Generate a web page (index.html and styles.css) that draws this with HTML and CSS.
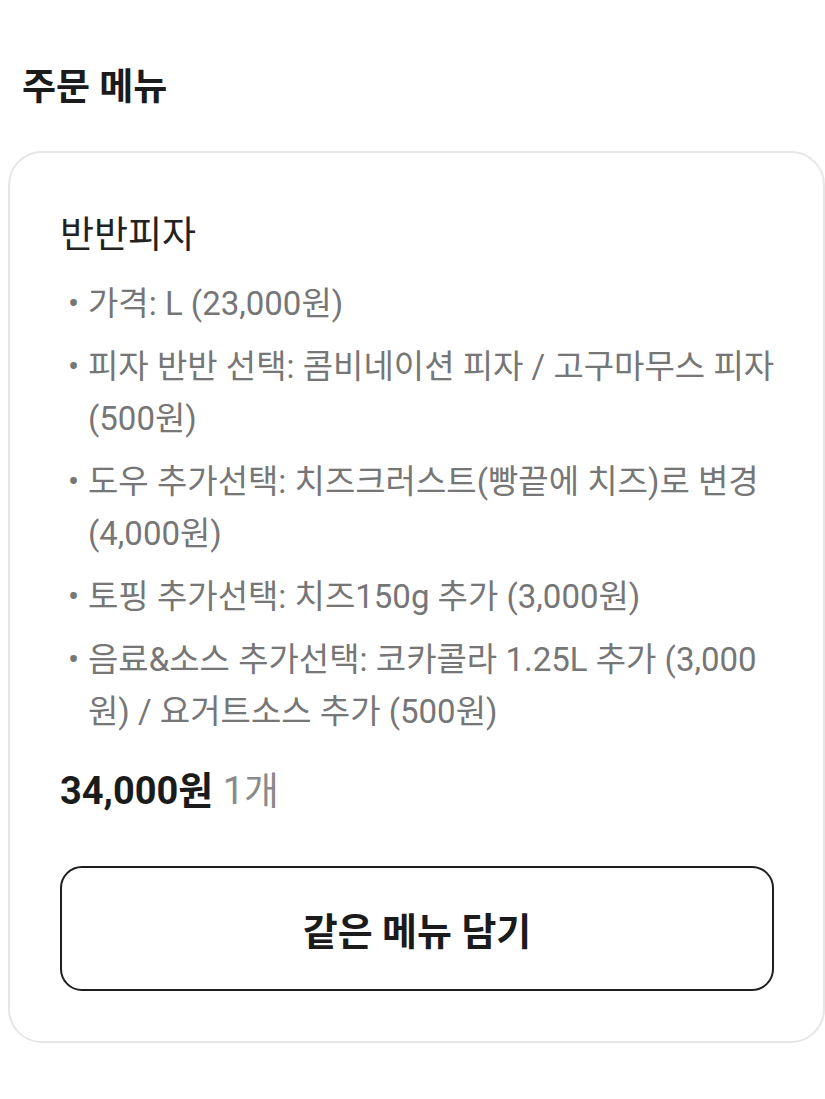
FILE: index.html
```html
<!DOCTYPE html>
<html lang="ko">
<head>
<meta charset="utf-8">
<link rel="stylesheet" href="styles.css">
</head>
<body>
<main class="page">
  <h2 class="section-title">주문 메뉴</h2>
  <section class="card">
    <h3 class="item-name">반반피자</h3>
    <ul class="options">
      <li><span class="dot">•</span><span class="opt-text">가격: L (23,000원)</span></li>
      <li><span class="dot">•</span><span class="opt-text">피자 반반 선택: 콤비네이션 피자 / 고구마무스 피자 (500원)</span></li>
      <li><span class="dot">•</span><span class="opt-text">도우 추가선택: 치즈크러스트(빵끝에 치즈)로 변경 (4,000원)</span></li>
      <li><span class="dot">•</span><span class="opt-text">토핑 추가선택: 치즈150g 추가 (3,000원)</span></li>
      <li><span class="dot">•</span><span class="opt-text">음료&amp;소스 추가선택: 코카콜라 1.25L 추가 (3,000원) / 요거트소스 추가 (500원)</span></li>
    </ul>
    <p class="price"><strong>34,000원</strong> <span class="qty">1개</span></p>
    <button class="add-btn" type="button">같은 메뉴 담기</button>
  </section>
</main>
</body>
</html>
```
FILE: styles.css
```css
html, body {
  margin: 0;
  padding: 0;
  background: #ffffff;
}
body {
  font-family: Roboto, "Noto Sans CJK KR", sans-serif;
  color: #1c1c1c;
}
.page {
  padding: 0 0 0 8px;
}
.section-title {
  margin: 0;
  padding: 66px 0 0 14px;
  font-size: 37px;
  line-height: 44px;
  font-weight: 700;
  color: #1b1b1b;
}
.card {
  margin-top: 41px;
  border: 2px solid #e6e6e6;
  border-radius: 34px;
  padding: 60px 49px 50px 50px;
  width: 714px;
}
.item-name {
  margin: 0;
  font-size: 37px;
  line-height: 46px;
  font-weight: 400;
  color: #222;
}
.options {
  list-style: none;
  margin: 19px -8px 0 0;
  padding: 0;
  display: flex;
  flex-direction: column;
  gap: 11px;
}
.options li {
  display: flex;
  font-size: 33px;
  line-height: 52px;
  color: #767676;
}
.dot {
  flex: 0 0 28px;
  box-sizing: border-box;
  padding-left: 8px;
}
.opt-text {
  flex: 1;
}
.price {
  margin: 29px 0 0;
  font-size: 38px;
  line-height: 48px;
  color: #1b1b1b;
}
.price strong {
  font-weight: 700;
}
.qty {
  color: #8a8a8a;
  font-weight: 400;
}
.add-btn {
  display: block;
  margin-top: 51px;
  width: 100%;
  height: 125px;
  border: 2px solid #1e1e1e;
  border-radius: 22px;
  background: #fff;
  font-family: Roboto, "Noto Sans CJK KR", sans-serif;
  font-size: 38px;
  font-weight: 700;
  color: #1b1b1b;
  cursor: pointer;
}
```
